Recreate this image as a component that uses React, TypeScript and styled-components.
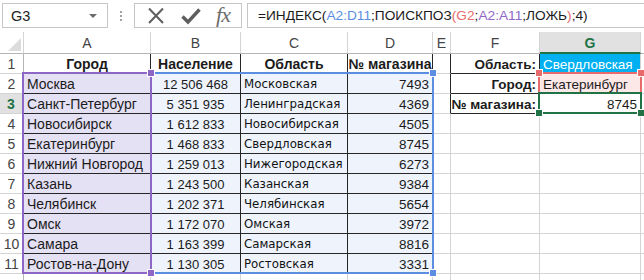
import React from "react";
import styled, { createGlobalStyle } from "styled-components";

const Global = createGlobalStyle`
  html, body { margin: 0; padding: 0; background: #ffffff; overflow: hidden; }
  body { font-family: "Liberation Sans", Arial, sans-serif; color: #1b1b1b; }
`;

const Page = styled.div`
  width: 644px;
  height: 280px;
  overflow: hidden;
  display: flex;
  flex-direction: column;
`;

/* ---------- Formula bar ---------- */
const FormulaBar = styled.div`
  height: 32px;
  display: flex;
  align-items: flex-start;
  padding: 3px 0 0 2px;
  box-sizing: border-box;
  margin-bottom: 4px;
`;

const NameBox = styled.div`
  width: 106px;
  height: 25px;
  box-sizing: border-box;
  border: 1px solid #c6c6c6;
  display: flex;
  align-items: center;
  justify-content: space-between;
  padding: 0 10px 0 8px;
  font-size: 14.5px;
  color: #222;
`;

const DropArrow = styled.span`
  width: 0;
  height: 0;
  border-left: 4px solid transparent;
  border-right: 4px solid transparent;
  border-top: 4px solid #6a6a6a;
`;

const Dots = styled.div`
  width: 26px;
  height: 25px;
  display: flex;
  flex-direction: column;
  align-items: center;
  justify-content: center;
  gap: 2px;
  & > span {
    width: 2px;
    height: 2px;
    background: #a0a0a0;
  }
`;

const ButtonGroup = styled.div`
  width: 108px;
  height: 25px;
  box-sizing: border-box;
  border: 1px solid #c6c6c6;
  display: flex;
  align-items: center;
  justify-content: space-around;
  padding: 0 4px;
`;

const Fx = styled.span`
  font-family: "Liberation Serif", "Times New Roman", serif;
  font-style: italic;
  font-size: 22px;
  color: #6d6d6d;
  line-height: 1;
  margin-top: -2px;
  letter-spacing: -1px;
`;

const FormulaInput = styled.div`
  flex: 1;
  margin-left: 5px;
  height: 25px;
  box-sizing: border-box;
  border: 1px solid #c6c6c6;
  border-right: none;
  display: flex;
  align-items: center;
  padding-left: 10px;
  font-size: 13.7px;
  color: #1b1b1b;
  white-space: nowrap;
`;

const Ref = styled.span<{ $c: string }>`
  color: ${(p) => p.$c};
`;

/* ---------- Sheet ---------- */
const Sheet = styled.div`
  position: relative;
  display: grid;
  grid-template-columns: 24px 127px 90px 107px 85px 18px 89px 101px 1fr;
  grid-auto-rows: 20px;
  grid-template-rows: 22px;
`;

const Corner = styled.div`
  border-right: 1px solid #d4d4d4;
  border-bottom: 1px solid #b5b5b5;
  position: relative;
  &::after {
    content: "";
    position: absolute;
    right: 2px;
    bottom: 2px;
    width: 0;
    height: 0;
    border-left: 13px solid transparent;
    border-bottom: 13px solid #dcdcdc;
  }
`;

const ColHeader = styled.div<{ $active?: boolean }>`
  box-sizing: border-box;
  border-right: 1px solid #d4d4d4;
  border-bottom: ${(p) => (p.$active ? "2px solid #217346" : "1px solid #b5b5b5")};
  background: ${(p) => (p.$active ? "#e1e1e1" : "#ffffff")};
  color: ${(p) => (p.$active ? "#217346" : "#444444")};
  font-weight: ${(p) => (p.$active ? 700 : 400)};
  font-size: 14px;
  display: flex;
  align-items: center;
  justify-content: center;
  padding-top: 1px;
`;

const RowHeader = styled.div<{ $active?: boolean }>`
  box-sizing: border-box;
  border-right: ${(p) => (p.$active ? "2px solid #217346" : "1px solid #b5b5b5")};
  border-bottom: 1px solid #d4d4d4;
  background: ${(p) => (p.$active ? "#e1e1e1" : "#ffffff")};
  color: ${(p) => (p.$active ? "#217346" : "#444444")};
  font-weight: ${(p) => (p.$active ? 700 : 400)};
  font-size: 14px;
  display: flex;
  align-items: center;
  justify-content: center;
`;

type Align = "left" | "center" | "right";

const Cell = styled.div<{
  $align?: Align;
  $bold?: boolean;
  $fill?: string;
  $color?: string;
  $size?: number;
  $font?: string;
  $dark?: boolean;
  $darkRight?: boolean;
  $darkBottom?: boolean;
}>`
  box-sizing: border-box;
  border-right: 1px solid ${(p) => (p.$dark || p.$darkRight ? "#262626" : "#d4d4d4")};
  border-bottom: 1px solid ${(p) => (p.$dark || p.$darkBottom ? "#262626" : "#d4d4d4")};
  background: ${(p) => p.$fill || "#ffffff"};
  color: ${(p) => p.$color || "#1b1b1b"};
  font-weight: ${(p) => (p.$bold ? 700 : 400)};
  font-size: ${(p) => p.$size || 14}px;
  font-family: ${(p) => p.$font || '"Liberation Sans", Arial, sans-serif'};
  display: flex;
  align-items: flex-end;
  padding: 0 3px 2px 3px;
  justify-content: ${(p) =>
    p.$align === "center" ? "center" : p.$align === "right" ? "flex-end" : "flex-start"};
  white-space: nowrap;
  overflow: hidden;
  line-height: 1;
`;

const RangeBox = styled.div<{ $c: string; $x: number; $y: number; $w: number; $h: number }>`
  position: absolute;
  left: ${(p) => p.$x}px;
  top: ${(p) => p.$y}px;
  width: ${(p) => p.$w}px;
  height: ${(p) => p.$h}px;
  box-sizing: border-box;
  border: 2px solid ${(p) => p.$c};
  pointer-events: none;
`;

const Handle = styled.div<{ $c: string; $x: number; $y: number }>`
  position: absolute;
  left: ${(p) => p.$x - 3}px;
  top: ${(p) => p.$y - 3}px;
  width: 6px;
  height: 6px;
  background: ${(p) => p.$c};
  box-shadow: 0 0 0 1px #ffffff;
`;

const rows: [string, string, string, string][] = [
  ["Москва", "12 506 468", "Московская", "7493"],
  ["Санкт-Петербург", "5 351 935", "Ленинградская", "4369"],
  ["Новосибирск", "1 612 833", "Новосибирская", "4505"],
  ["Екатеринбург", "1 468 833", "Свердловская", "8745"],
  ["Нижний Новгород", "1 259 013", "Нижегородская", "6273"],
  ["Казань", "1 243 500", "Казанская", "9384"],
  ["Челябинск", "1 202 371", "Челябинская", "5654"],
  ["Омск", "1 172 070", "Омская", "3972"],
  ["Самара", "1 163 399", "Самарская", "8816"],
  ["Ростов-на-Дону", "1 130 305", "Ростовская", "3331"],
];

const PURPLE = "#8e67c6";
const BLUE = "#5b8ee0";
const RED = "#e86b6b";
const GREEN = "#217346";
const LAV = "#e5e1f4";
const SKY = "#eef3fc";
const C_FONT = '"DejaVu Sans", Verdana, sans-serif';

const cols = ["A", "B", "C", "D", "E", "F", "G", ""];

export default function App() {
  const sideLabels = ["Область:", "Город:", "№ магазина:"];
  return (
    <Page>
      <Global />
      <FormulaBar>
        <NameBox>
          <span>G3</span>
          <DropArrow />
        </NameBox>
        <Dots>
          <span />
          <span />
          <span />
        </Dots>
        <ButtonGroup>
          <svg width="20" height="18" viewBox="0 0 20 18">
            <path d="M3 1.5 L17 16 M17 1.5 L3 16" stroke="#5f5f5f" strokeWidth="2" fill="none" />
          </svg>
          <svg width="22" height="18" viewBox="0 0 22 18">
            <path d="M2.5 9.5 L8 15 L19.5 2.5" stroke="#5f5f5f" strokeWidth="3.4" fill="none" />
          </svg>
          <Fx>fx</Fx>
        </ButtonGroup>
        <FormulaInput>
          =ИНДЕКС(<Ref $c={BLUE}>A2:D11</Ref>;ПОИСКПОЗ<Ref $c={RED}>(</Ref>
          <Ref $c={RED}>G2</Ref>;<Ref $c={PURPLE}>A2:A11</Ref>;ЛОЖЬ<Ref $c={RED}>)</Ref>;4)
        </FormulaInput>
      </FormulaBar>

      <Sheet>
        <Corner />
        {cols.map((c, i) => (
          <ColHeader key={"h" + i} $active={c === "G"}>
            {c}
          </ColHeader>
        ))}

        {/* Row 1 */}
        <RowHeader>1</RowHeader>
        <Cell $bold $align="center" $dark>Город</Cell>
        <Cell $bold $align="center" $dark>Население</Cell>
        <Cell $bold $align="center" $dark>Область</Cell>
        <Cell $bold $align="center" $dark>№ магазина</Cell>
        <Cell $darkRight />
        <Cell $bold $align="right" $size={13.5} $dark>{sideLabels[0]}</Cell>
        <Cell $fill="#00b0f0" $color="#ffffff" $size={13.5} $darkBottom>Свердловская</Cell>
        <Cell />

        {rows.map((r, i) => {
          const n = i + 2;
          return (
            <React.Fragment key={n}>
              <RowHeader $active={n === 3}>{n}</RowHeader>
              <Cell $fill={LAV} $size={14} $dark>{r[0]}</Cell>
              <Cell $fill={SKY} $align="center" $size={13} $dark>{r[1]}</Cell>
              <Cell $fill={SKY} $size={11.8} $font={C_FONT} $color="#111" $dark>{r[2]}</Cell>
              <Cell $fill={SKY} $align="right" $size={13.5} $dark>{r[3]}</Cell>
              <Cell $darkRight={n <= 3} />
              {n <= 3 ? (
                <Cell $bold $align="right" $size={13.5} $dark>{sideLabels[n - 1]}</Cell>
              ) : (
                <Cell />
              )}
              {n === 2 ? (
                <Cell $fill="#fde8e8" $size={13.5} $darkBottom>Екатеринбург</Cell>
              ) : n === 3 ? (
                <Cell $align="right" $size={13.5}>8745</Cell>
              ) : (
                <Cell />
              )}
              <Cell />
            </React.Fragment>
          );
        })}
        <RowHeader />
        {cols.map((_, i) => (
          <Cell key={"r12" + i} />
        ))}

        {/* reference range overlays */}
        <RangeBox $c={BLUE} $x={22} $y={40} $w={412} $h={202} />
        <RangeBox $c={PURPLE} $x={22} $y={40} $w={130} $h={202} />
        <Handle $c={BLUE} $x={433} $y={41} />
        <Handle $c={BLUE} $x={433} $y={241} />
        <Handle $c={PURPLE} $x={151} $y={41} />
        <Handle $c={PURPLE} $x={151} $y={241} />
        <RangeBox $c={RED} $x={538} $y={40} $w={104} $h={22} />
        <RangeBox $c={GREEN} $x={538} $y={60} $w={104} $h={22} />
        <Handle $c={RED} $x={539} $y={41} />
        <Handle $c={RED} $x={641} $y={41} />
        <Handle $c={GREEN} $x={539} $y={81} />
        <Handle $c={GREEN} $x={641} $y={81} />
      </Sheet>
    </Page>
  );
}
